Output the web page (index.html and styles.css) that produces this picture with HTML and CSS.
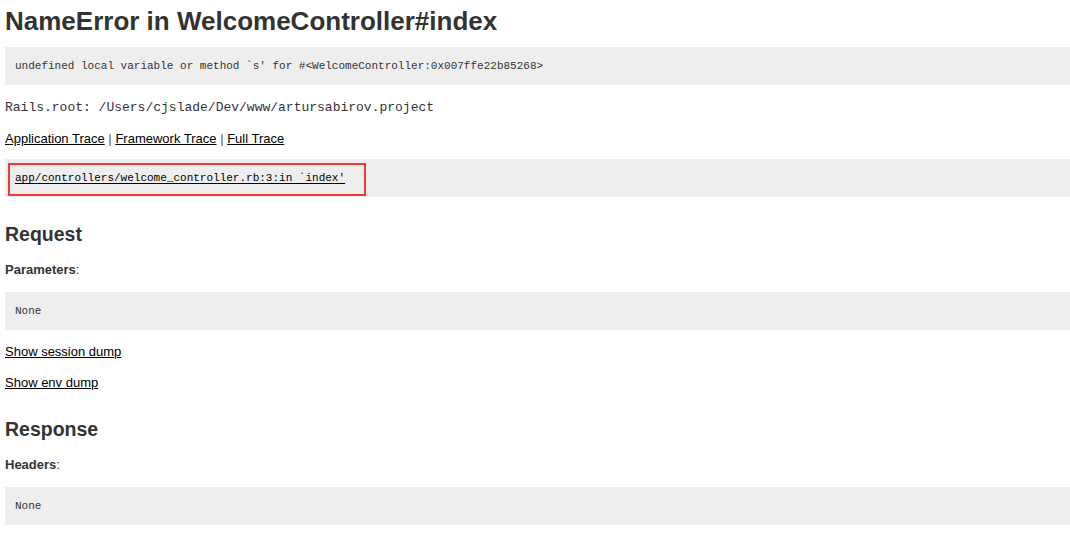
FILE: index.html
```html
<!DOCTYPE html>
<html>
<head>
<meta charset="utf-8">
<title>Action Controller: Exception caught</title>
<link rel="stylesheet" href="styles.css">
</head>
<body>
<h1>NameError in WelcomeController#index</h1>
<pre class="message">undefined local variable or method `s' for #&lt;WelcomeController:0x007ffe22b85268&gt;</pre>

<p><code class="root">Rails.root: /Users/cjslade/Dev/www/artursabirov.project</code></p>

<div class="traces">
  <p class="trace-links"><a href="#">Application Trace</a> <span class="sep">|</span> <a href="#">Framework Trace</a> <span class="sep">|</span> <a href="#">Full Trace</a></p>
  <pre class="trace"><code><a href="#">app/controllers/welcome_controller.rb:3:in `index'</a></code><span class="highlight"></span></pre>
</div>

<h2 class="section">Request</h2>
<p><b>Parameters</b>:</p>
<pre>None</pre>

<p class="summary"><a href="#">Show session dump</a></p>
<p class="summary last"><a href="#">Show env dump</a></p>

<h2 class="section">Response</h2>
<p><b>Headers</b>:</p>
<pre>None</pre>
</body>
</html>
```

FILE: styles.css
```css
html { background: #fff; }
body {
  margin: 0 0 0 5px;
  background-color: #fff;
  color: #333;
  font-family: "Liberation Sans", Arial, Helvetica, sans-serif;
  font-size: 13px;
  line-height: 18px;
}
p { margin: 13px 0; }
h1 {
  font-size: 26px;
  font-weight: bold;
  margin: 12px 0 17px;
}
h2 {
  font-size: 19.5px;
  font-weight: bold;
  margin: 16px 0;
}
h2.section { margin-top: 28px; margin-bottom: 18px; }
pre {
  background-color: #eee;
  padding: 10px;
  margin: 11px 0;
  font-family: "Liberation Mono", "Courier New", monospace;
  font-size: 11px;
  line-height: 18px;
  white-space: pre-wrap;
}
code {
  font-family: "Liberation Mono", "Courier New", monospace;
}
code.root { font-size: 13px; }
a { color: #000; }
.sep { color: #555; }
.trace-links { margin-bottom: 11px; }
.trace { position: relative; }
.trace a { text-underline-offset: 2px; }
.highlight {
  position: absolute;
  left: 3px;
  top: 4px;
  width: 358px;
  height: 33px;
  box-sizing: border-box;
  border: 2px solid #f03a3a;
}
.summary.last { margin-bottom: 18px; }
```
